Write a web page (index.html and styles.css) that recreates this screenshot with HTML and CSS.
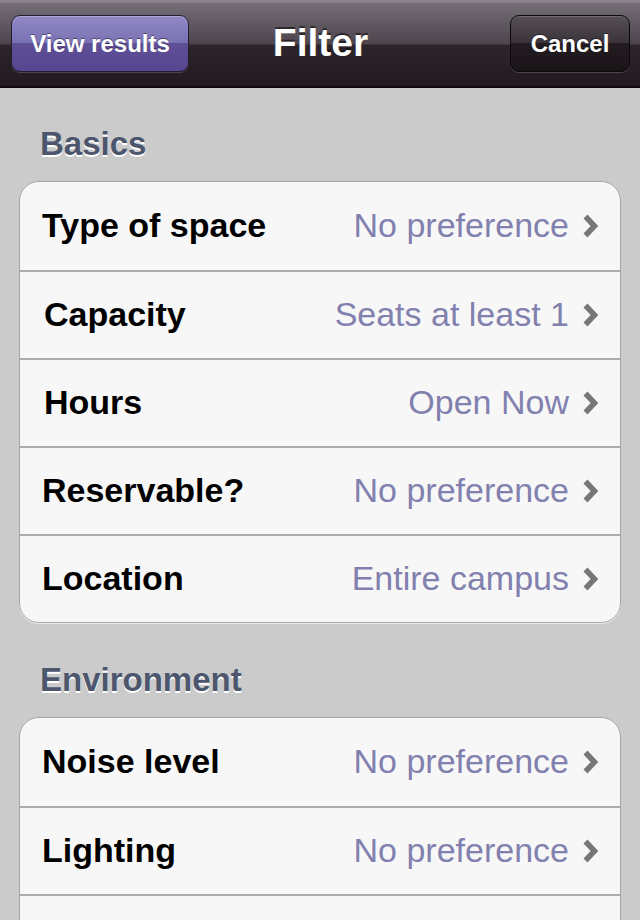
FILE: index.html
```html
<!DOCTYPE html>
<html>
<head>
<meta charset="utf-8">
<link rel="stylesheet" href="styles.css">
</head>
<body>
<header class="navbar">
  <button class="btn btn-primary">View results</button>
  <h1 class="title">Filter</h1>
  <button class="btn btn-dark">Cancel</button>
</header>
<main class="content">
  <h2 class="section-title">Basics</h2>
  <ul class="group">
    <li class="row"><span class="label">Type of space</span><span class="value">No preference</span><svg class="chev" viewBox="0 0 18 26"><polyline points="3.5,3.5 12.5,13 3.5,22.5"/></svg></li>
    <li class="row"><span class="label label-c">Capacity</span><span class="value">Seats at least 1</span><svg class="chev" viewBox="0 0 18 26"><polyline points="3.5,3.5 12.5,13 3.5,22.5"/></svg></li>
    <li class="row"><span class="label label-c">Hours</span><span class="value">Open Now</span><svg class="chev" viewBox="0 0 18 26"><polyline points="3.5,3.5 12.5,13 3.5,22.5"/></svg></li>
    <li class="row"><span class="label">Reservable?</span><span class="value">No preference</span><svg class="chev" viewBox="0 0 18 26"><polyline points="3.5,3.5 12.5,13 3.5,22.5"/></svg></li>
    <li class="row"><span class="label">Location</span><span class="value">Entire campus</span><svg class="chev" viewBox="0 0 18 26"><polyline points="3.5,3.5 12.5,13 3.5,22.5"/></svg></li>
  </ul>
  <h2 class="section-title">Environment</h2>
  <ul class="group">
    <li class="row"><span class="label">Noise level</span><span class="value">No preference</span><svg class="chev" viewBox="0 0 18 26"><polyline points="3.5,3.5 12.5,13 3.5,22.5"/></svg></li>
    <li class="row"><span class="label">Lighting</span><span class="value">No preference</span><svg class="chev" viewBox="0 0 18 26"><polyline points="3.5,3.5 12.5,13 3.5,22.5"/></svg></li>
    <li class="row"></li>
  </ul>
</main>
</body>
</html>
```

FILE: styles.css
```css
* { box-sizing: border-box; }
html, body {
  margin: 0;
  padding: 0;
  background: #cbcbcb;
  font-family: "Liberation Sans", Arial, sans-serif;
  overflow: hidden;
}
.navbar {
  height: 88px;
  display: grid;
  grid-template-columns: 1fr auto 1fr;
  align-items: center;
  padding: 0 10px 0 11px;
  background: linear-gradient(to bottom, #8c858d 0px, #8c858d 2px, #756e76 3px, #4d444d 44px, #2e252c 45px, #221a20 86px);
  border-bottom: 2px solid #0c090b;
}
.btn {
  height: 57px;
  margin-top: 1px;
  font-family: "Liberation Sans", Arial, sans-serif;
  font-weight: bold;
  font-size: 24px;
  color: #fff;
  border-radius: 9px;
  padding: 0;
  text-shadow: 0 -1px 0 rgba(0,0,0,0.45);
  cursor: pointer;
}
.btn-primary {
  justify-self: start;
  width: 178px;
  border: 1px solid #231d33;
  background: linear-gradient(to bottom, #9189c4 0%, #7a71b3 49%, #5e4f97 50%, #554690 100%);
  box-shadow: inset 0 1px 0 rgba(255,255,255,0.25), 0 1px 0 rgba(255,255,255,0.18);
}
.btn-dark {
  justify-self: end;
  width: 120px;
  border: 1px solid #0c090b;
  background: linear-gradient(to bottom, #564e55 0%, #3b333a 49%, #231c21 50%, #1a1418 100%);
  box-shadow: inset 0 1px 0 rgba(255,255,255,0.15), 0 1px 0 rgba(255,255,255,0.18);
}
.title {
  margin: 0;
  color: #fff;
  font-size: 39px;
  font-weight: bold;
  text-shadow: 0 -2px 0 rgba(0,0,0,0.5);
  line-height: 44px;
}
.content {
  padding: 0 19px;
}
.section-title {
  margin: 0;
  padding: 36px 0 17px 21px;
  font-size: 33px;
  line-height: 40px;
  font-weight: bold;
  color: #4c566d;
  text-shadow: 0 2px 0 #ffffff;
}
.group {
  list-style: none;
  margin: 0 0 1px;
  padding: 0;
  background: #f7f7f7;
  border: 1px solid #a7a7a7;
  border-radius: 20px;
  box-shadow: 0 1px 0 rgba(255,255,255,0.6);
  overflow: hidden;
}
.row {
  height: 88px;
  display: flex;
  align-items: center;
  padding: 0 20px 1px 22px;
  font-size: 34px;
}
.row + .row {
  border-top: 2px solid #adadad;
}
.label {
  font-weight: bold;
  color: #000;
  flex: 1;
  white-space: nowrap;
}
.label-c { padding-left: 2px; }
.value {
  color: #8280ae;
  white-space: nowrap;
  margin-right: 13px;
}
.chev {
  width: 18px;
  height: 26px;
  flex: none;
}
.chev polyline {
  fill: none;
  stroke: #777777;
  stroke-width: 5.5;
  stroke-linecap: butt;
  stroke-linejoin: miter;
}
```
